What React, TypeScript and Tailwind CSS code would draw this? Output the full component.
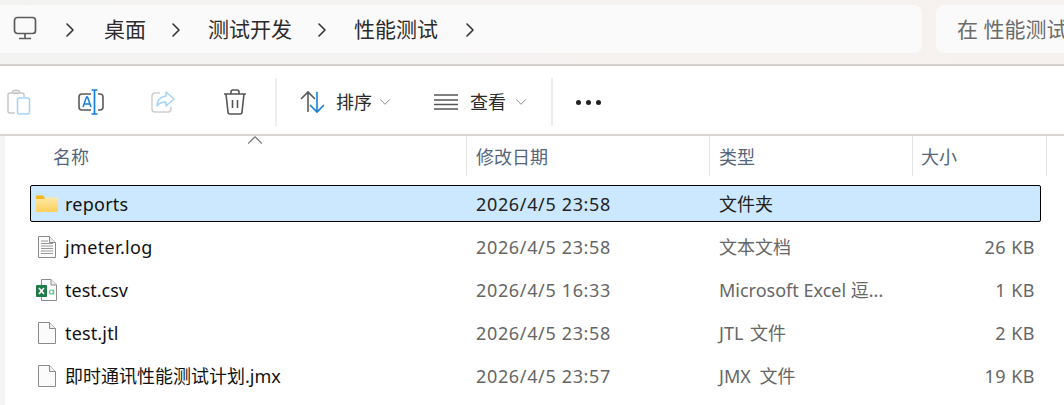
import { ChevronRight, ChevronDown, ChevronUp } from 'lucide-react'

const FONT = "font-['Noto_Sans','Noto_Sans_CJK_SC',sans-serif]"

const files = [
  { name: 'reports', nameClass: 'tracking-[0.25px]', date: '2026/4/5 23:58', type: '文件夹', typeClass: '', size: '', icon: 'folder', selected: true },
  { name: 'jmeter.log', nameClass: 'tracking-[0.35px]', date: '2026/4/5 23:58', type: '文本文档', typeClass: '', size: '26 KB', icon: 'text' },
  { name: 'test.csv', nameClass: '', date: '2026/4/5 16:33', type: 'Microsoft Excel 逗...', typeClass: '', size: '1 KB', icon: 'excel' },
  { name: 'test.jtl', nameClass: 'tracking-[0.15px]', date: '2026/4/5 23:58', type: 'JTL 文件', typeClass: '[word-spacing:2px]', size: '2 KB', icon: 'blank' },
  { name: '即时通讯性能测试计划.jmx', nameClass: '', date: '2026/4/5 23:57', type: 'JMX 文件', typeClass: '[word-spacing:4px]', size: '19 KB', icon: 'blank' },
]

function FileIcon({ kind }: { kind: string }) {
  if (kind === 'folder') {
    return (
      <svg width="24" height="24" viewBox="0 0 24 24">
        <defs>
          <linearGradient id="fold" x1="0" y1="0" x2="0" y2="1">
            <stop offset="0" stopColor="#ffe9a6" />
            <stop offset="1" stopColor="#fbcf5c" />
          </linearGradient>
        </defs>
        <path d="M1 4.500a1 1 0 0 1 1-1h6l2 2.500v2H1z" fill="#f5b91f" />
        <path d="M1 7h8l2-1.500h11.500a.5.500 0 0 1 .5.500v13.500a.5.500 0 0 1-.5.500H2a1 1 0 0 1-1-1z" fill="url(#fold)" />
      </svg>
    )
  }
  if (kind === 'excel') {
    return (
      <svg width="24" height="24" viewBox="0 0 24 24">
        <path d="M6.500 1.500h9.500l5.500 5.500v15.500h-15z" fill="#fdfdfd" stroke="#8c8c8c" />
        <path d="M16 1.500v5.500h5.500" fill="#eee" stroke="#8c8c8c" />
        <rect x="1" y="7" width="11" height="12" fill="#1f7a45" rx="1" />
        <path d="M4 10l5 6M9 10l-5 6" stroke="#fff" strokeWidth="1.700" />
        <circle cx="16.500" cy="14" r="2" fill="none" stroke="#59c98a" strokeWidth="1.200" />
        <path d="M18.600 11.500v5" stroke="#59c98a" strokeWidth="1.200" />
      </svg>
    )
  }
  return (
    <svg width="24" height="24" viewBox="0 0 24 24">
      <path d="M3.500 1.500h11l6 6v15h-17z" fill="#fbfbfb" stroke="#8a8a8a" />
      <path d="M14.500 1.500v6h6" fill="#efefef" stroke="#8a8a8a" />
      {kind === 'text' && (
        <path
          d="M6 6h7M6 8.500h12M6 11h12M6 13.500h12M6 16h12M6 18.500h12"
          stroke="#9a9a9a"
          strokeWidth="1"
        />
      )}
    </svg>
  )
}

export default function App() {
  return (
    <div className={`${FONT} w-[1064px] h-[405px] overflow-hidden bg-white`}>
      {/* address bar */}
      <div className="flex h-[66px] items-start gap-[14px] border-b-2 border-[#d3d0ce] bg-gradient-to-r from-[#f3f3f2] to-[#f6f1ef] pt-[5px]">
        <div className="flex h-[48px] w-[922px] shrink-0 items-center rounded-r-lg bg-[#fbfafa] pt-[2px] text-[21px] text-[#2b2b2b]">
          <svg className="mb-[4px] ml-[13px]" width="24" height="24" viewBox="0 0 24 24" fill="none" stroke="#5c5c5c" strokeWidth="1.700">
            <rect x="1.500" y="1.500" width="21" height="16" rx="3" />
            <path d="M12 18v4M6 22.500h12" />
          </svg>
          <ChevronRight className="ml-[21px] text-[#333]" size={24} strokeWidth={1.600} />
          <span className="ml-[22px]">桌面</span>
          <ChevronRight className="ml-[18px] text-[#333]" size={24} strokeWidth={1.600} />
          <span className="ml-[20px]">测试开发</span>
          <ChevronRight className="ml-[18px] text-[#333]" size={24} strokeWidth={1.600} />
          <span className="ml-[20px]">性能测试</span>
          <ChevronRight className="ml-[20px] text-[#333]" size={24} strokeWidth={1.600} />
        </div>
        <div className="flex h-[48px] flex-1 items-center overflow-hidden whitespace-nowrap rounded-l-lg bg-[#fbfafa] pl-[21px] pt-[2px] text-[21px] text-[#6b6b6b]">
          在 性能测试
        </div>
      </div>

      {/* toolbar */}
      <div className="flex h-[70px] items-center border-b-2 border-[#d6d3d1] pt-[4px] text-[18px] text-[#2b2b2b]">
        <svg className="ml-[7px]" width="24" height="26" viewBox="0 0 24 26" fill="none">
          <path d="M8 24H3a2 2 0 0 1-2-2V6a2 2 0 0 1 2-2h12a2 2 0 0 1 2 2v2" stroke="#c8c8c8" strokeWidth="1.500" />
          <rect x="5.500" y="1.500" width="7" height="3" rx="1" stroke="#c8c8c8" strokeWidth="1.300" />
          <rect x="10.500" y="9" width="12" height="16" rx="2" stroke="#a5d3f7" strokeWidth="1.500" />
        </svg>
        <svg className="ml-[47px]" width="26" height="26" viewBox="0 0 26 26" fill="none">
          <path d="M13 5H4a3 3 0 0 0-3 3v10a3 3 0 0 0 3 3h9M20 5h2a3 3 0 0 1 3 3v10a3 3 0 0 1-3 3h-2" stroke="#5a5a5a" strokeWidth="1.600" />
          <path d="M5 18l3.500-10h1L13 18M6.300 15h5.400" stroke="#1480dc" strokeWidth="1.500" />
          <path d="M16.500 1v24M13.500 1h6M13.500 25h6" stroke="#1480dc" strokeWidth="1.700" />
        </svg>
        <svg className="ml-[47px]" width="24" height="24" viewBox="0 0 24 24" fill="none">
          <path d="M9 3H4a3 3 0 0 0-3 3v13a3 3 0 0 0 3 3h13a3 3 0 0 0 3-3v-2" stroke="#cfcfcf" strokeWidth="1.500" />
          <path d="M15 2l8 7-8 7v-4c-4 0-7 1-9 4 0-5 3-9 9-10z" stroke="#a5d3f7" strokeWidth="1.500" strokeLinejoin="round" />
        </svg>
        <svg className="ml-[48px]" width="24" height="26" viewBox="0 0 24 26" fill="none" stroke="#555" strokeWidth="1.600">
          <path d="M1 5h22M8 5V3a2 2 0 0 1 2-2h4a2 2 0 0 1 2 2v2" />
          <path d="M3 5l2 18a2 2 0 0 0 2 2h10a2 2 0 0 0 2-2l2-18" />
          <path d="M9.500 11v8M14.500 11v8" />
        </svg>
        <div className="ml-[28px] h-[48px] w-[2px] bg-[#eeeeee]" />
        <svg className="ml-[23px]" width="26" height="24" viewBox="0 0 26 24" fill="none" strokeWidth="1.600">
          <path d="M8 22V2M1 9l7-7 7 7" stroke="#5a5a5a" />
          <path d="M17 2v20M10 15l7 7 7-7" stroke="#1480dc" />
        </svg>
        <span className="ml-[10px]">排序</span>
        <ChevronDown className="ml-[4px] text-[#777]" size={18} strokeWidth={1.100} />
        <svg className="ml-[40px]" width="24" height="18" viewBox="0 0 24 18" fill="none" stroke="#555" strokeWidth="1.500">
          <path d="M0 2h24M0 7h24M0 11.500h24M0 16h24" />
        </svg>
        <span className="ml-[12px]">查看</span>
        <ChevronDown className="ml-[6px] text-[#777]" size={18} strokeWidth={1.100} />
        <div className="ml-[21px] h-[48px] w-[2px] bg-[#eeeeee]" />
        <div className="ml-[23px] flex gap-[5px]">
          <span className="h-[5px] w-[5px] rounded-full bg-[#222]" />
          <span className="h-[5px] w-[5px] rounded-full bg-[#222]" />
          <span className="h-[5px] w-[5px] rounded-full bg-[#222]" />
        </div>
      </div>

      {/* file list */}
      <div className="relative pl-[30px]">
        <ChevronUp className="absolute left-[242px] top-[-9px] text-[#777]" size={26} strokeWidth={1} />
        <div className="absolute bottom-[-200px] left-0 top-0 w-[5px] bg-[#f4f4f4]" />

        <div className="flex h-[40px] text-[18px] text-[#54657c]">
          <div className="flex w-[437px] items-center border-r border-[#e5e5e5] pl-[23px] pt-[2px]">名称</div>
          <div className="flex w-[243px] items-center border-r border-[#e5e5e5] pl-[9px] pt-[2px]">修改日期</div>
          <div className="flex w-[203px] items-center border-r border-[#e5e5e5] pl-[9px] pt-[2px]">类型</div>
          <div className="flex w-[134px] items-center border-r border-[#e5e5e5] pl-[8px] pt-[2px]">大小</div>
        </div>

        <div className="mt-[9px] w-[1011px] text-[18px]">
          {files.map((file) => (
            <div
              key={file.name}
              className={`mb-[6px] flex h-[37px] items-center whitespace-nowrap rounded-[2px] border ${
                file.selected ? 'border-black bg-[#cce8ff]' : 'border-transparent'
              }`}
            >
              <div className="flex w-[445px] items-center gap-[6px] pl-[4px] text-[#111]">
                <FileIcon kind={file.icon} />
                <span className={`pt-[2px] ${file.nameClass}`}>{file.name}</span>
              </div>
              <div className={`w-[243px] pt-[2px] tracking-[0.65px] ${file.selected ? 'text-[#222]' : 'text-[#666]'}`}>{file.date}</div>
              <div className={`w-[200px] pt-[2px] ${file.typeClass} ${file.selected ? 'text-[#222]' : 'text-[#666]'}`}>{file.type}</div>
              <div className="w-[116px] pt-[2px] text-right tracking-[0.5px] text-[#666]">{file.size}</div>
            </div>
          ))}
        </div>
      </div>
    </div>
  )
}
